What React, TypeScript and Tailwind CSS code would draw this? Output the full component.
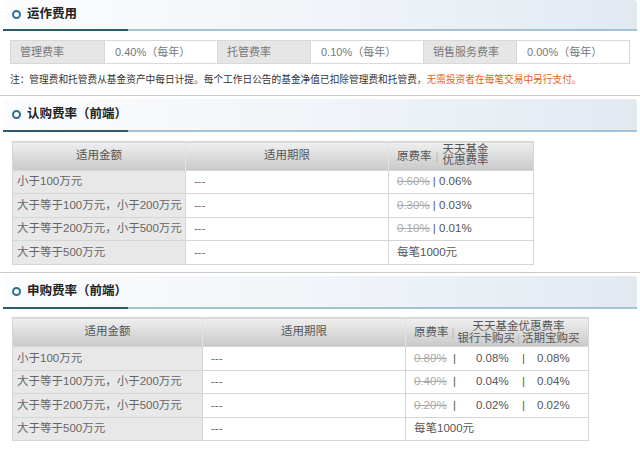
import React from 'react';

const font = { fontFamily: '"Liberation Sans", "Noto Sans CJK SC", sans-serif' };

const Header: React.FC<{ title: string; first?: boolean }> = ({ title, first }) => (
  <div className={`mx-[3px] ${first ? 'h-[31px]' : 'h-[33px]'} flex flex-col`}>
    <div className="flex-1 flex items-center pl-[9px] bg-gradient-to-r from-[#fbfcfd] via-[#f1f5f9] to-[#e2e9f1] rounded-tr-[3px]">
      <span className="w-[9px] h-[9px] rounded-full border-2 border-[#2f6f8e]" />
      <span className="ml-[6px] text-[12.5px] font-bold text-[#222]">{title}</span>
    </div>
    <div className="flex h-[2px]">
      <div className="w-[125px] bg-[#2e5b6c]" />
      <div className="flex-1 bg-[#a3c2d4]" />
    </div>
  </div>
);

const Sep = () => <div className="h-px bg-[#c9c9c9]" />;

const th = 'font-normal text-[#555] bg-gradient-to-b from-[#efefef] to-[#c9c9c9] border-l border-[#e2e2e2] first:border-l-0';
const tdL = 'bg-[#e8e8e8] text-[#666] pl-[4px] text-left border-t border-[#d6d6d6]';
const tdW = 'bg-white text-[#666] pl-[8px] text-left border-t border-l border-[#d6d6d6]';

const amounts = ['小于100万元', '大于等于100万元，小于200万元', '大于等于200万元，小于500万元', '大于等于500万元'];

const Table1 = () => {
  const rates = [['0.60%', '0.06%'], ['0.30%', '0.03%'], ['0.10%', '0.01%']];
  return (
    <table className="ml-[12px] mt-[9px] w-[521px] border-collapse table-fixed border border-[#d6d6d6] text-[11.5px]">
      <colgroup>
        <col className="w-[173px]" />
        <col className="w-[203px]" />
        <col className="w-[145px]" />
      </colgroup>
      <thead>
        <tr className="h-[29px]">
          <th className={th}>适用金额</th>
          <th className={th}>适用期限</th>
          <th className={`${th} text-left pl-[8px]`}>
            <div className="flex items-center leading-[11px]">
              <span>原费率</span>
              <span className="mx-[4px] text-[#bbb]">|</span>
              <span className="text-center -mt-[3px]">天天基金<br />优惠费率</span>
            </div>
          </th>
        </tr>
      </thead>
      <tbody>
        {amounts.map((a, i) => (
          <tr key={a} className={i % 2 ? 'h-[24px]' : 'h-[23px]'}>
            <td className={tdL}>{a}</td>
            <td className={tdW}>---</td>
            <td className={tdW}>
              {i < 3 ? (
                <>
                  <span className="line-through text-[#aaa]">{rates[i][0]}</span>
                  <span className="text-[#555]"> | {rates[i][1]}</span>
                </>
              ) : (
                <span className="text-[#555]">每笔1000元</span>
              )}
            </td>
          </tr>
        ))}
      </tbody>
    </table>
  );
};

const Table2 = () => {
  const rates = [['0.80%', '0.08%'], ['0.40%', '0.04%'], ['0.20%', '0.02%']];
  return (
    <table className="ml-[12px] mt-[8px] w-[576px] border-collapse table-fixed border border-[#d6d6d6] text-[11.5px]">
      <colgroup>
        <col className="w-[190px]" />
        <col className="w-[203px]" />
        <col className="w-[183px]" />
      </colgroup>
      <thead>
        <tr className="h-[29px]">
          <th className={th}>适用金额</th>
          <th className={th}>适用期限</th>
          <th className={`${th} text-left pl-[8px]`}>
            <div className="flex items-center leading-[12px]">
              <span>原费率</span>
              <span className="mx-[3px] text-[#bbb]">|</span>
              <div className="flex flex-col items-center">
                <span>天天基金优惠费率</span>
                <span>银行卡购买<span className="text-[#bbb] mx-[2px]">|</span>活期宝购买</span>
              </div>
            </div>
          </th>
        </tr>
      </thead>
      <tbody>
        {amounts.map((a, i) => (
          <tr key={a} className={i % 2 ? 'h-[23px]' : 'h-[24px]'}>
            <td className={tdL}>{a}</td>
            <td className={tdW}>---</td>
            <td className={tdW}>
              {i < 3 ? (
                <div className="flex items-center text-[#555]">
                  <span className="line-through text-[#aaa] w-[32px]">{rates[i][0]}</span>
                  <span className="ml-[7px]">|</span>
                  <span className="ml-[20px] w-[32px]">{rates[i][1]}</span>
                  <span className="ml-[14px]">|</span>
                  <span className="ml-[12px]">{rates[i][1]}</span>
                </div>
              ) : (
                <span className="text-[#555]">每笔1000元</span>
              )}
            </td>
          </tr>
        ))}
      </tbody>
    </table>
  );
};

export default function App() {
  const fees = [
    ['管理费率', '0.40%（每年）'],
    ['托管费率', '0.10%（每年）'],
    ['销售服务费率', '0.00%（每年）'],
  ];
  return (
    <div className="w-[640px] h-[453px] bg-white overflow-hidden" style={font}>
      <Header title="运作费用" first />
      <div className="ml-[10px] mt-[9px] w-[620px] h-[24px] flex border border-[#d9d9d9] text-[11px]">
        {fees.map(([k, v], i) => (
          <React.Fragment key={k}>
            <div className={`w-[93px] flex items-center pl-[9px] bg-[#e6e6e6] text-[#777] ${i ? 'border-l border-[#d9d9d9]' : ''}`}>{k}</div>
            <div className="w-[113px] flex items-center pl-[10px] bg-white text-[#777] border-l border-[#d9d9d9]">{v}</div>
          </React.Fragment>
        ))}
      </div>
      <div className="ml-[10px] mt-[9px] h-[14px] text-[9.7px] leading-[14px] text-[#333] whitespace-nowrap">
        注：管理费和托管费从基金资产中每日计提。每个工作日公告的基金净值已扣除管理费和托管费，
        <span className="text-[#e2621b]">无需投资者在每笔交易中另行支付。</span>
      </div>
      <div className="mt-[8px]"><Sep /></div>
      <div className="mt-[3px]"><Header title="认购费率（前端）" /></div>
      <Table1 />
      <div className="mt-[7px]"><Sep /></div>
      <div className="mt-[3px]"><Header title="申购费率（前端）" /></div>
      <Table2 />
    </div>
  );
}
